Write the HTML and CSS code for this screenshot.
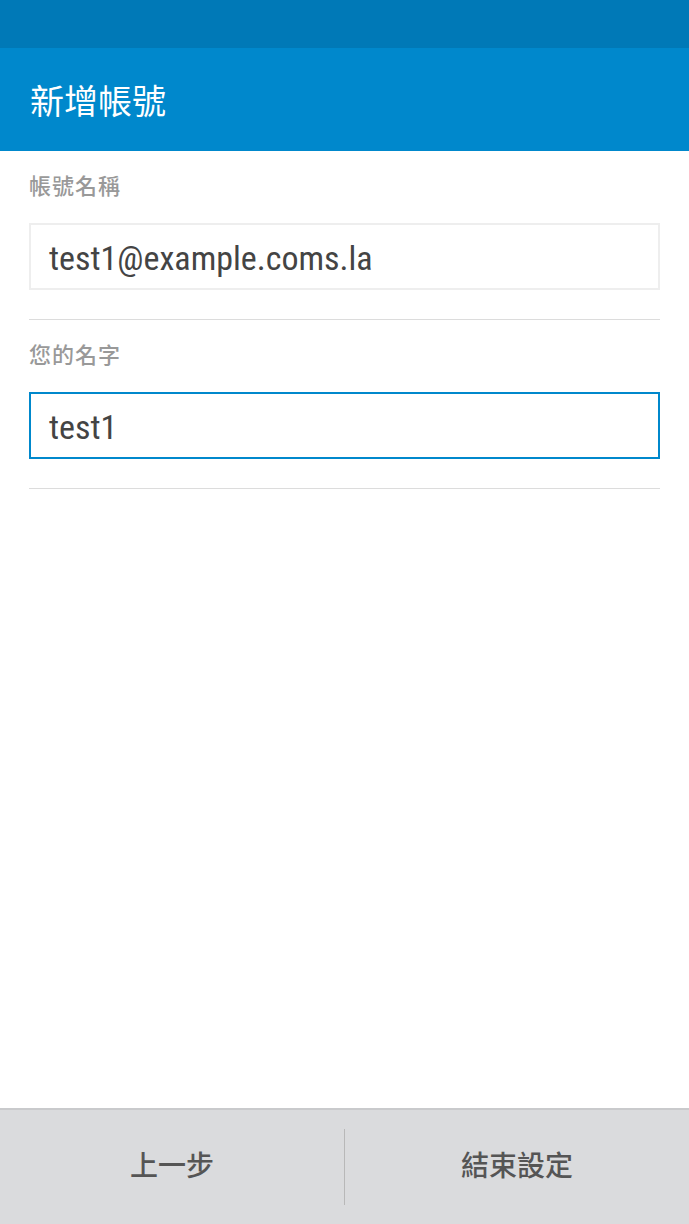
FILE: index.html
```html
<!DOCTYPE html>
<html lang="zh-Hant">
<head>
<meta charset="utf-8">
<title>新增帳號</title>
<link rel="stylesheet" href="styles.css">
</head>
<body>
	<div class="statusbar"></div>
	<div class="toolbar">
		<h1 class="title">新增帳號</h1>
	</div>

	<div class="content">
		<div class="field">
			<div class="label">帳號名稱</div>
			<div class="input">test1@example.coms.la</div>
		</div>
		<div class="field">
			<div class="label">您的名字</div>
			<div class="input focused">test1</div>
		</div>
	</div>

	<div class="buttonbar">
		<div class="btn">上一步</div>
		<div class="sep"></div>
		<div class="btn">結束設定</div>
	</div>
</body>
</html>
```
FILE: styles.css
```css
html, body {
    margin: 0;
    padding: 0;
    height: 100%;
}
body {
    display: flex;
    flex-direction: column;
    font-family: Roboto, "Noto Sans CJK TC", sans-serif;
    background-color: #fff;
}
.statusbar {
    height: 48px;
    background-color: #0079b7;
}
.toolbar {
    height: 103px;
    background-color: #0088cc;
    display: flex;
    align-items: center;
    padding-left: 30px;
}
.title {
    margin: 0;
    font-size: 34px;
    font-weight: normal;
    color: #fff;
}
.content {
    flex: 1;
    padding: 0 29px;
}
.field {
    border-bottom: 1px solid #dcdcdc;
    padding-bottom: 29px;
}
.label {
    font-size: 22px;
    font-weight: 500;
    letter-spacing: 1px;
    color: #999;
    padding-top: 22px;
    height: 50px;
    box-sizing: border-box;
    line-height: 28px;
}
.input {
    margin-top: 22px;
    height: 67px;
    box-sizing: border-box;
    border: 2px solid #eeeeee;
    padding: 3px 0 0 18px;
    display: flex;
    align-items: center;
    font-family: "Roboto Condensed", "Liberation Sans Narrow", Roboto, sans-serif;
    font-size: 34px;
    color: #444;
}
.focused {
    border-color: #0088cc;
}
.buttonbar {
    height: 116px;
    box-sizing: border-box;
    border-top: 2px solid #c9cacc;
    background-color: #dadbdd;
    display: flex;
    align-items: center;
}
.btn {
    flex: 1;
    text-align: center;
    font-size: 28px;
    font-weight: 500;
    color: #555;
    padding-bottom: 6px;
}
.sep {
    width: 1px;
    height: 76px;
    background-color: #b8b8b8;
}
```
